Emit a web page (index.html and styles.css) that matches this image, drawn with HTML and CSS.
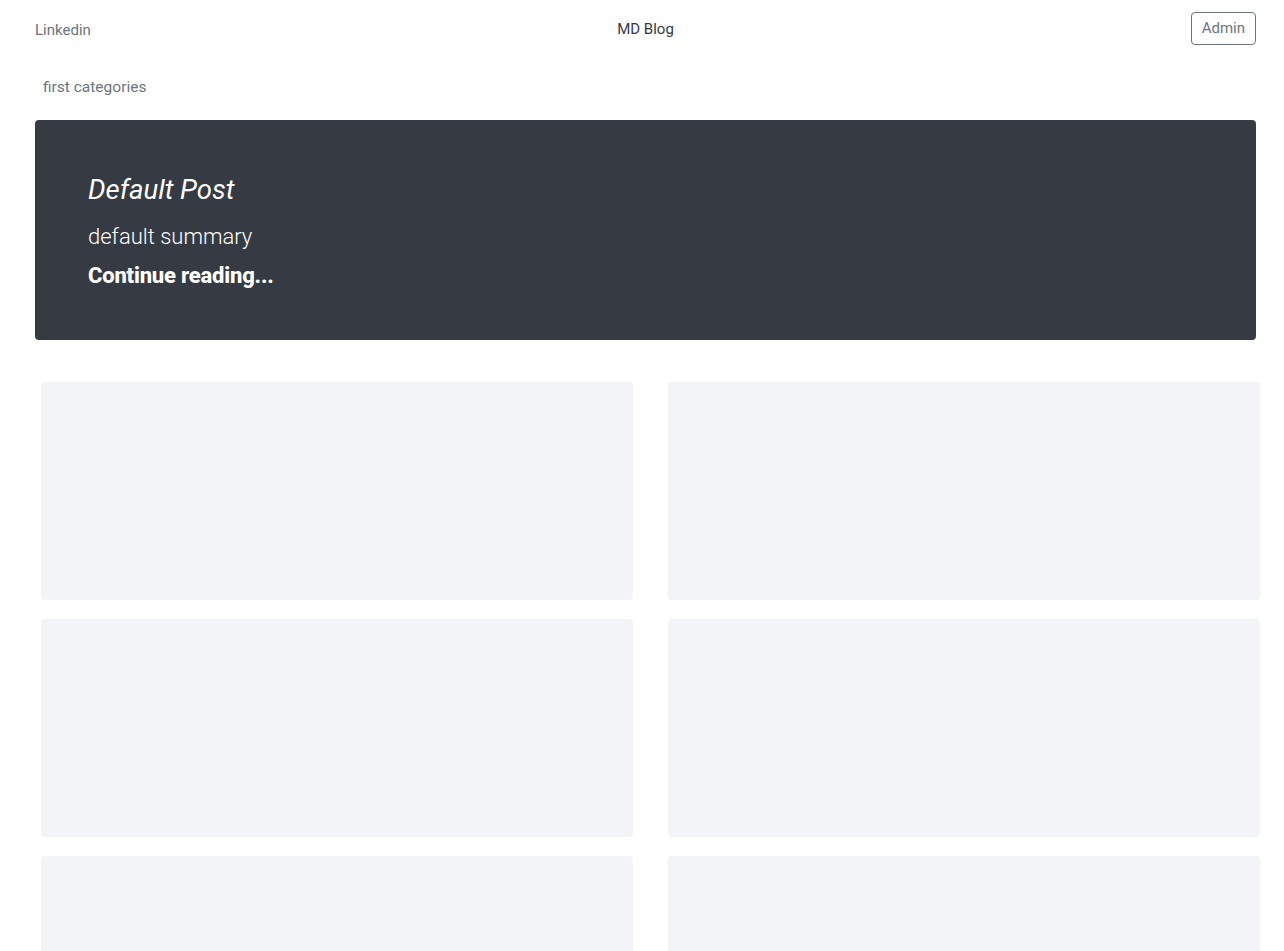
FILE: index.html
```html
<!DOCTYPE html>
<html lang="en">
<head>
<meta charset="utf-8">
<title>MD Blog</title>
<link rel="stylesheet" href="styles.css">
</head>
<body>
<div class="page">
  <header class="blog-header">
    <div class="col col-left"><a class="link-secondary" href="#">Linkedin</a></div>
    <div class="col col-center"><a class="logo" href="#">MD Blog</a></div>
    <div class="col col-right"><a class="btn-admin" href="#">Admin</a></div>
  </header>
  <nav class="cat-nav">
    <a class="cat-link" href="#">first categories</a>
  </nav>
  <section class="hero">
    <h1 class="hero-title">Default Post</h1>
    <p class="hero-lead">default summary</p>
    <p class="hero-more"><a href="#">Continue reading...</a></p>
  </section>
  <div class="cards">
    <div class="card"></div>
    <div class="card"></div>
    <div class="card"></div>
    <div class="card"></div>
    <div class="card"></div>
    <div class="card"></div>
  </div>
</div>
</body>
</html>
```
FILE: styles.css
```css
* { box-sizing: border-box; }
html, body { margin: 0; padding: 0; background: #fff; }
body {
  font-family: Roboto, "Liberation Sans", Arial, sans-serif;
  font-size: 16px;
  line-height: 1.5;
  color: #212529;
}
a { text-decoration: none; }
.page {
  padding: 0 28px 0 35px;
}
.blog-header {
  display: flex;
  align-items: center;
  justify-content: space-between;
  padding-top: 12px;
  height: 45px;
}
.col { flex: 1 1 0; }
.col-left { padding-top: 4px; font-size: 15px; }
.col-center { text-align: center; }
.col-right { display: flex; justify-content: flex-end; }
.link-secondary { color: #6c757d; }
.logo { color: #343a40; font-size: 15px; }
.btn-admin {
  display: inline-block;
  font-size: 15px;
  line-height: 23px;
  padding: 4px 10px;
  border: 1px solid #6c757d;
  border-radius: 4px;
  color: #6c757d;
}
.cat-nav {
  display: flex;
  margin-top: 22px;
}
.cat-link {
  padding: 8px;
  color: #6c757d;
  font-size: 15.5px;
  line-height: 24px;
}
.hero {
  margin-top: 13px;
  background: #363a43;
  color: #fff;
  border-radius: 4px;
  height: 220px;
  padding: 55px 48px 0 53px;
}
.hero-title {
  margin: 0;
  font-size: 27.5px;
  font-style: italic;
  font-weight: 400;
  line-height: 30px;
}
.hero-lead {
  margin: 16px 0 0;
  font-size: 22px;
  font-weight: 300;
  line-height: 32px;
}
.hero-more {
  margin: 8px 0 0;
  font-size: 22px;
  font-weight: 800;
  line-height: 30px;
  letter-spacing: -0.2px;
}
.hero-more a { color: #fff; }
.cards {
  display: grid;
  grid-template-columns: 592px 592px;
  column-gap: 35px;
  row-gap: 19px;
  margin: 42px -4px 0 6px;
}
.card {
  height: 218px;
  background: #f3f4f8;
  border-radius: 4px;
}
```
